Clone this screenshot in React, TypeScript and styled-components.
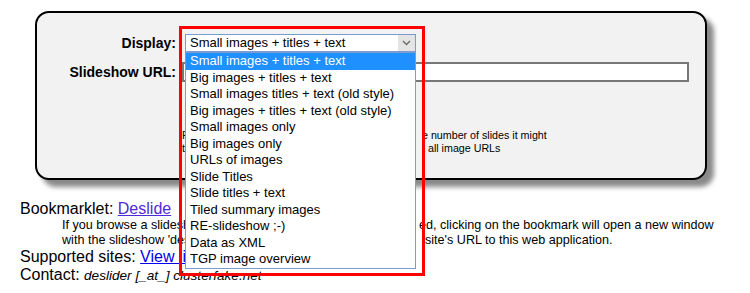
import styled, { createGlobalStyle } from 'styled-components';

const GlobalStyle = createGlobalStyle`
  html, body {
    margin: 0;
    background: #fff;
  }
  body {
    font-family: "Liberation Sans", Arial, sans-serif;
    color: #000;
  }
`;

const Page = styled.div`
  padding: 11px 20px 0 20px;
`;

const Panel = styled.form`
  margin-left: 15px;
  width: 672px;
  box-sizing: border-box;
  border: 2px solid #000;
  border-radius: 14px;
  background: #f2f2f2;
  box-shadow: 7px 7px 5px #8a8a8a;
  padding: 21px 16px 23px 0;
  display: grid;
  grid-template-columns: 139px 1fr;
  column-gap: 6px;
  row-gap: 10px;
  align-items: center;
`;

const Label = styled.label`
  font-size: 14px;
  font-weight: bold;
  text-align: right;
`;

const FieldCell = styled.div`
  grid-column: 2;
`;

const SelectWrap = styled.div`
  position: relative;
  z-index: 10;
  margin-left: 3px;
  width: 231px;
  height: 18px;
  box-sizing: border-box;
  border: 1px solid #7b9bd1;
  background: #fff;
  display: flex;
`;

const SelectValue = styled.span`
  flex: 1;
  font-size: 13px;
  line-height: 16px;
  padding-left: 4px;
  white-space: nowrap;
`;

const ArrowBox = styled.span`
  width: 17px;
  display: flex;
  align-items: center;
  justify-content: center;
  background-color: #e4e4e4;
  background-image: radial-gradient(#cfcfcf 0.6px, transparent 0.7px);
  background-size: 2px 2px;
`;

const OptionList = styled.ul`
  position: absolute;
  top: 17px;
  left: -1px;
  width: 231px;
  box-sizing: border-box;
  margin: 0;
  padding: 0;
  list-style: none;
  border: 1px solid #7b9bd1;
  background: #fff;
`;

const OptionItem = styled.li<{ $active?: boolean }>`
  height: 16.5px;
  line-height: 16.5px;
  padding-left: 4px;
  font-size: 13px;
  white-space: nowrap;
  background: ${(p) => (p.$active ? '#1e90ff' : 'transparent')};
  color: ${(p) => (p.$active ? '#fff' : '#000')};
`;

const Highlight = styled.div`
  position: absolute;
  left: -7px;
  top: -9px;
  width: 246px;
  height: 250px;
  box-sizing: border-box;
  border: 3px solid #ff0000;
  pointer-events: none;
  z-index: 11;
`;

const UrlInput = styled.input`
  display: block;
  width: 100%;
  height: 20px;
  box-sizing: border-box;
  border: 2px solid #777;
  background: #fff;
  font-size: 13px;
  padding: 0 3px;
`;

const SubmitButton = styled.button`
  height: 27px;
  margin-left: 60px;
  font-family: inherit;
  font-size: 13px;
`;

const Note = styled.p`
  margin: 0;
  font-size: 10.7px;
  line-height: 13px;
  white-space: nowrap;
`;

// start of a line whose tail sits under the open dropdown
const Lead = styled.span<{ $w: number }>`
  display: inline-block;
  width: ${(p) => p.$w}px;
  overflow: hidden;
  white-space: nowrap;
  vertical-align: top;
`;

const Footer = styled.div`
  margin-top: 20px;
  font-size: 16px;
  line-height: 18px;
`;

const Line = styled.div``;

const Description = styled.div`
  padding-left: 42px;
  font-size: 12.6px;
  line-height: 15px;
  white-space: nowrap;
`;

const Link = styled.a<{ $visited?: boolean }>`
  color: ${(p) => (p.$visited ? '#4f2ad8' : '#0000ee')};
  text-decoration: underline;
`;

const Email = styled.span`
  font-size: 13.6px;
  font-style: italic;
`;

const options = [
  'Small images + titles + text',
  'Big images + titles + text',
  'Small images titles + text (old style)',
  'Big images + titles + text (old style)',
  'Small images only',
  'Big images only',
  'URLs of images',
  'Slide Titles',
  'Slide titles + text',
  'Tiled summary images',
  'RE-slideshow ;-)',
  'Data as XML',
  'TGP image overview',
];

const App = () => (
  <Page>
    <GlobalStyle />
    <Panel onSubmit={(e) => e.preventDefault()}>
      <Label>Display:</Label>
      <FieldCell>
        <SelectWrap>
          <SelectValue>{options[0]}</SelectValue>
          <ArrowBox>
            <svg width="9" height="6" viewBox="0 0 9 6">
              <path d="M1 1l3.5 3.5L8 1" fill="none" stroke="#6a6a6a" strokeWidth="1.4" />
            </svg>
          </ArrowBox>
          <OptionList>
            {options.map((o, i) => (
              <OptionItem key={o} $active={i === 0}>
                {o}
              </OptionItem>
            ))}
          </OptionList>
          <Highlight />
        </SelectWrap>
      </FieldCell>
      <Label>Slideshow URL:</Label>
      <FieldCell>
        <UrlInput type="text" />
      </FieldCell>
      <FieldCell>
        <SubmitButton type="submit">Deslide!</SubmitButton>
      </FieldCell>
      <FieldCell>
        <Note>
          <Lead $w={240}>First, Deslide loads the first page to detect th</Lead>e number of slides it might
          <br />
          <Lead $w={240}>take a while. Some sites display some, but no</Lead>t all image URLs
        </Note>
      </FieldCell>
    </Panel>
    <Footer>
      <Line>
        Bookmarklet: <Link href="#" $visited>Deslide</Link>
      </Line>
      <Description>
        <Lead $w={357}>If you browse a slideshow on a website that is already support</Lead>ed, clicking on the bookmark will open a new window
        <br />
        <Lead $w={363}>with the slideshow 'deslided'. The bookmarklet just sends the </Lead>site's URL to this web application.
      </Description>
      <Line>
        Supported sites: <Link href="#">View list</Link>
      </Line>
      <Line>
        Contact: <Email>deslider [_at_] clusterfake.net</Email>
      </Line>
    </Footer>
  </Page>
);

export default App;
